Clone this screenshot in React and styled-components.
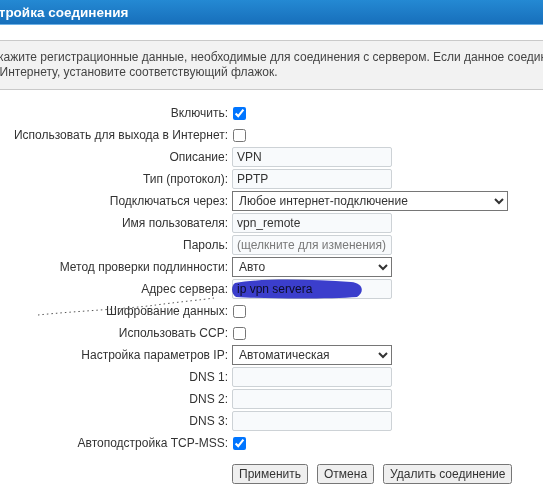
import React from 'react';
import styled, { createGlobalStyle } from 'styled-components';

const GlobalStyle = createGlobalStyle`
  body {
    margin: 0;
    background: #fff;
    font-family: "Liberation Sans", Arial, sans-serif;
    overflow: hidden;
  }
`;

const Page = styled.div`
  margin-left: -30px;
  width: 900px;
  font-size: 12px;
  color: #333;
`;

const Header = styled.div`
  height: 24px;
  padding-left: 4px;
  display: flex;
  align-items: center;
  background: linear-gradient(#2489d3, #176fbb);
  border-bottom: 1px solid #6cb0e6;
  color: #fff;
  font-weight: bold;
  font-size: 13.5px;
`;

const Info = styled.div`
  margin-top: 15px;
  padding: 9px 0 9px 21px;
  background: #f2f2f2;
  border-top: 1px solid #c9c9c9;
  border-bottom: 1px solid #c9c9c9;
  line-height: 15px;
  color: #444;
  white-space: nowrap;
`;

const Form = styled.div`
  margin-top: 12px;
  display: grid;
  grid-template-columns: 258px 1fr;
  column-gap: 4px;
  grid-auto-rows: 22px;
  align-items: center;
`;

const Label = styled.div`
  text-align: right;
  white-space: nowrap;
  position: relative;
`;

const Cell = styled.div`
  display: flex;
  align-items: center;
  position: relative;
`;

const Check = styled.input.attrs({ type: 'checkbox' })`
  margin: 0 0 0 1px;
  width: 13px;
  height: 13px;
`;

const Text = styled.input`
  box-sizing: border-box;
  width: 160px;
  height: 20px;
  padding: 0 4px;
  border: 1px solid #cdd2d6;
  border-radius: 2px;
  background: #f8fafc;
  font: 12px "Liberation Sans", Arial, sans-serif;
  color: #333;
  outline: none;

  &::placeholder {
    color: #7a7a7a;
  }
`;

const Select = styled.select`
  box-sizing: border-box;
  width: ${p => p.$w}px;
  height: 20px;
  padding: 0 2px;
  font: 12px "Liberation Sans", Arial, sans-serif;
  color: #333;
  background: #fff;
`;

const Buttons = styled.div`
  display: flex;
  gap: 9px;
  margin: 10px 0 0 262px;
`;

const Button = styled.button`
  height: 20px;
  padding: 0 5px;
  font: 12px "Liberation Sans", Arial, sans-serif;
  color: #333;
`;

const Scribble = styled.svg`
  position: absolute;
  left: -1px;
  top: -1px;
  mix-blend-mode: multiply;
  pointer-events: none;
`;

const Dots = styled.svg`
  position: absolute;
  right: 12px;
  top: -9px;
  pointer-events: none;
`;

const Row = ({ label, children, extra }) => (
  <>
    <Label>
      {extra}
      {label}
    </Label>
    <Cell>{children}</Cell>
  </>
);

export default function App() {
  return (
    <Page>
      <GlobalStyle />
      <Header>Настройка соединения</Header>
      <Info>
        Укажите регистрационные данные, необходимые для соединения с сервером. Если данное соединение используется для доступа
        <br />к Интернету, установите соответствующий флажок.
      </Info>
      <Form>
        <Row label="Включить:">
          <Check defaultChecked />
        </Row>
        <Row label="Использовать для выхода в Интернет:">
          <Check />
        </Row>
        <Row label="Описание:">
          <Text defaultValue="VPN" />
        </Row>
        <Row label="Тип (протокол):">
          <Text defaultValue="PPTP" />
        </Row>
        <Row label="Подключаться через:">
          <Select $w={276} defaultValue="any">
            <option value="any">Любое интернет-подключение</option>
          </Select>
        </Row>
        <Row label="Имя пользователя:">
          <Text defaultValue="vpn_remote" />
        </Row>
        <Row label="Пароль:">
          <Text placeholder="(щелкните для изменения)" />
        </Row>
        <Row label="Метод проверки подлинности:">
          <Select $w={160} defaultValue="auto">
            <option value="auto">Авто</option>
          </Select>
        </Row>
        <Row label="Адрес сервера:">
          <Text defaultValue="ip vpn servera" />
          <Scribble width="134" height="22" viewBox="0 0 134 22">
            <path
              d="M4 5 C 30 0, 80 1, 120 4 C 132 5, 134 14, 126 19 C 100 21, 40 21, 5 19 C 0 16, 0 8, 4 5 Z"
              fill="#3c3fcf"
            />
          </Scribble>
        </Row>
        <Row
          label="Шифрование данных:"
          extra={
            <Dots width="180" height="24" viewBox="0 0 180 24">
              <path
                d="M2 20 C 40 16, 90 14, 120 10 S 165 5, 178 3"
                fill="none"
                stroke="#555"
                strokeWidth="1"
                strokeDasharray="1.5 3"
              />
            </Dots>
          }
        >
          <Check />
        </Row>
        <Row label="Использовать CCP:">
          <Check />
        </Row>
        <Row label="Настройка параметров IP:">
          <Select $w={160} defaultValue="auto">
            <option value="auto">Автоматическая</option>
          </Select>
        </Row>
        <Row label="DNS 1:">
          <Text />
        </Row>
        <Row label="DNS 2:">
          <Text />
        </Row>
        <Row label="DNS 3:">
          <Text />
        </Row>
        <Row label="Автоподстройка TCP-MSS:">
          <Check defaultChecked />
        </Row>
      </Form>
      <Buttons>
        <Button>Применить</Button>
        <Button>Отмена</Button>
        <Button>Удалить соединение</Button>
      </Buttons>
    </Page>
  );
}
